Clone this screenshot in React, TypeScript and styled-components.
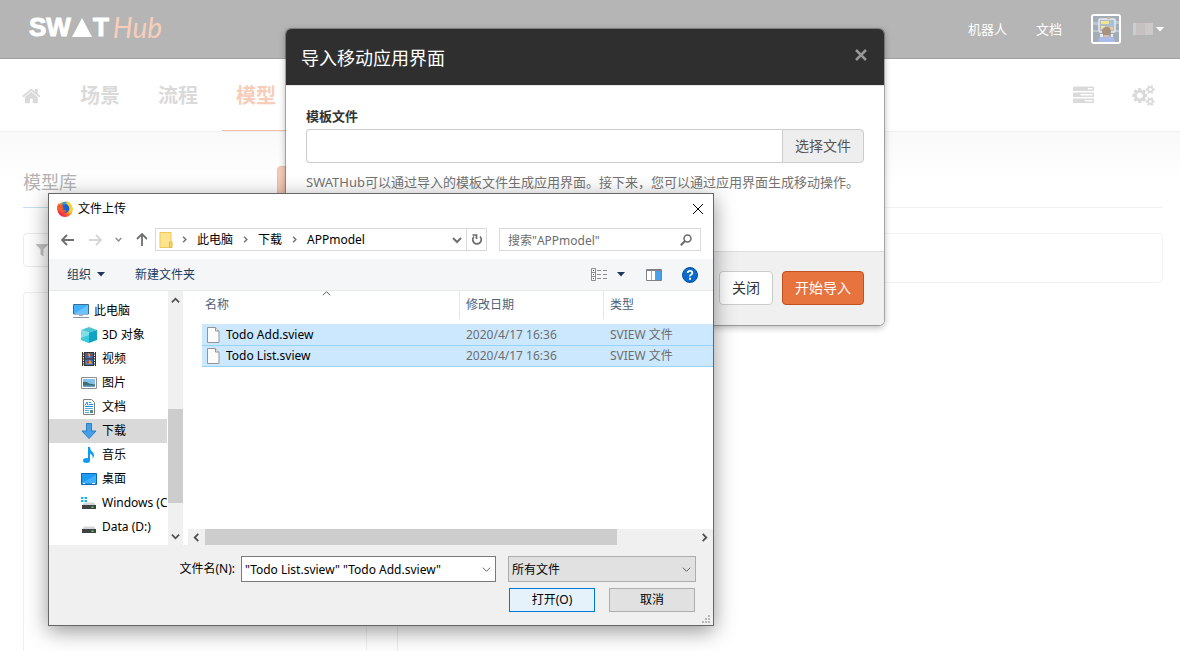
import React from "react";
import styled, { createGlobalStyle, css } from "styled-components";
import { FaFilter } from "react-icons/fa";

const GlobalStyle = createGlobalStyle`
  * { box-sizing: border-box; }
  html, body { margin: 0; padding: 0; }
  body {
    font-family: "Noto Sans", "Noto Sans CJK SC", sans-serif;
    font-size: 13px;
    line-height: 20px;
    color: #333;
    background: #fff;
  }
  button, input, select { font-family: inherit; margin: 0; }
  svg { display: block; flex: none; }
`;

/* ---------- page behind the dialogs ---------- */

const Page = styled.div`
  position: relative;
  min-height: 100vh;
  overflow: hidden;
  display: flex;
  flex-direction: column;
`;

const TopBar = styled.header`
  display: flex;
  align-items: center;
  justify-content: space-between;
  height: 59px;
  padding: 0 16px 0 29px;
  background: #b5b5b5;
  border-bottom: 1px solid #a2a2a2;
`;

const Logo = styled.a`
  display: flex;
  align-items: center;
  gap: 1px;
  height: 58px;
  padding-bottom: 4px;
  color: #fff;
  text-decoration: none;
  font: bold 26px/30px "Liberation Sans", sans-serif;
  -webkit-text-stroke: 1px #fff;
`;

const LogoHub = styled.span`
  margin-left: 3px;
  color: #f8cdb9;
  font: italic 400 28px/30px Lato, sans-serif;
  -webkit-text-stroke: 0;
`;

const TopLinks = styled.nav`
  display: flex;
  align-items: center;
`;

const TopLink = styled.a`
  margin-right: 29px;
  color: #fff;
  text-decoration: none;
`;

const Avatar = styled.span`
  width: 30px;
  height: 30px;
  margin-right: 12px;
  border: 2px solid #fff;
  border-radius: 3px;
  overflow: hidden;
`;

const UserMenu = styled.button`
  display: flex;
  align-items: center;
  gap: 3px;
  padding: 0;
  border: 0;
  background: none;
`;

const UserName = styled.span`
  width: 20px;
  height: 12px;
  background: linear-gradient(90deg, #c5d0d2 0 3px, #c6c0c0 3px 12px, #cbc9c9 12px);
`;

const NavBar = styled.div`
  display: flex;
  justify-content: space-between;
  height: 73px;
  padding: 0 11px 0 8px;
  border-bottom: 1px solid #f0f0f0;
`;

const NavGroup = styled.nav`
  display: flex;
  gap: 10px;
`;

const NavItem = styled.a<{ $active?: boolean }>`
  display: flex;
  align-items: center;
  height: 72px;
  padding: 2px 14px 0;
  color: ${(p) => (p.$active ? "#f7cdb9" : "#dadada")};
  border-bottom: 1px solid ${(p) => (p.$active ? "#f5bfa6" : "transparent")};
  font-size: 20px;
  font-weight: bold;
  text-decoration: none;
`;

const Main = styled.main`
  flex: 1;
  display: flex;
  flex-direction: column;
  padding: 34px 17px 0 23px;
  background: linear-gradient(#f9f9f9, #fff 50px);
`;

const TitleRow = styled.div`
  display: flex;
  justify-content: space-between;
  height: 42px;
  border-bottom: 1px solid #f2f2f2;
`;

const Title = styled.h1`
  margin: 0;
  height: 42px;
  padding-top: 3px;
  border-bottom: 1px solid #c5e0ef;
  color: #b3b3b3;
  font-size: 18px;
  line-height: 26px;
  font-weight: 400;
`;

const NewButton = styled.button`
  width: 120px;
  height: 34px;
  margin-right: 766px;
  border: 1px solid #efbda8;
  border-radius: 4px;
  background: #f7cbb8;
`;

const Columns = styled.div`
  flex: 1;
  display: flex;
  gap: 30px;
  margin-top: 25px;
`;

const LeftColumn = styled.div`
  flex: 0 0 344px;
  display: flex;
  flex-direction: column;
  gap: 25px;
`;

const RightColumn = styled.div`
  flex: 1;
  display: flex;
  flex-direction: column;
`;

const FilterButton = styled.button`
  display: flex;
  align-items: center;
  height: 34px;
  padding: 0 12px;
  border: 1px solid #ebebeb;
  border-radius: 4px;
  background: #fff;
  color: #c4c4c4;
`;

const TreePanel = styled.div`
  flex: 1;
  border: 1px solid #f0f0f0;
  border-bottom: 0;
  border-radius: 4px 4px 0 0;
`;

const Toolbar = styled.div`
  height: 50px;
  border: 1px solid #f2f2f2;
  border-radius: 4px;
`;

const Canvas = styled.div`
  flex: 1;
  border-left: 1px solid #ebebeb;
`;

/* ---------- import modal ---------- */

const Overlay = styled.div`
  position: absolute;
  inset: 0;
  display: flex;
  align-items: flex-start;
  justify-content: center;
  padding: 28px 10px 0 0;
`;

const Modal = styled.section`
  width: 600px;
  border: 1px solid rgba(0, 0, 0, 0.25);
  border-radius: 6px;
  background: #fff;
  background-clip: padding-box;
  box-shadow: 0 2px 6px rgba(0, 0, 0, 0.25);
  overflow: hidden;
`;

const ModalHeader = styled.header`
  display: flex;
  justify-content: space-between;
  height: 57px;
  padding: 16px 17px 14px 15px;
  background: #2f2f2f;
  border-bottom: 1px solid #e5e5e5;
`;

const ModalTitle = styled.h2`
  margin: 0;
  color: #fff;
  font-size: 18px;
  line-height: 26px;
  font-weight: normal;
`;

const ModalClose = styled.button`
  display: flex;
  align-items: center;
  height: 20px;
  padding: 0;
  border: 0;
  background: none;
`;

const ModalBody = styled.div`
  height: 165px;
  padding: 20px;
`;

const FieldLabel = styled.label`
  display: block;
  margin-bottom: 3px;
  color: #333;
  font-weight: bold;
`;

const InputGroup = styled.div`
  display: flex;
  height: 34px;
`;

const FileInput = styled.input`
  flex: 1;
  min-width: 0;
  padding: 0 12px;
  border: 1px solid #ccc;
  border-right: 0;
  border-radius: 4px 0 0 4px;
  font-size: 14px;
`;

const Button = styled.button<{ $kind?: "addon" | "primary" }>`
  height: 34px;
  padding: 0 12px;
  border: 1px solid #ccc;
  border-radius: 4px;
  background: #fff;
  color: #333;
  font-size: 14px;
  line-height: 20px;
  ${(p) =>
    p.$kind === "addon" &&
    css`
      border-radius: 0 4px 4px 0;
      background: #eee;
      color: #555;
    `}
  ${(p) =>
    p.$kind === "primary" &&
    css`
      border-color: #c2511f;
      background: #e7733f;
      color: #fff;
    `}
`;

const HelpText = styled.p`
  margin: 9px 0 0;
  color: #737373;
  white-space: nowrap;
`;

const ModalFooter = styled.footer`
  display: flex;
  justify-content: flex-end;
  gap: 9px;
  padding: 19px 20px 20px;
  background: #f0f0f0;
  border-top: 1px solid #ddd;
`;

/* ---------- native file picker window ---------- */

const Window = styled.section`
  position: absolute;
  left: 48px;
  top: 193px;
  width: 666px;
  display: flex;
  flex-direction: column;
  border: 1px solid #666;
  background: #fff;
  color: #000;
  font-size: 12px;
  line-height: 16px;
  box-shadow: 0 5px 20px rgba(0, 0, 0, 0.42);
`;

const WindowTitle = styled.header`
  display: flex;
  align-items: center;
  gap: 5px;
  height: 29px;
  padding: 0 9px 0 8px;
`;

const WindowName = styled.h2`
  flex: 1;
  margin: 0;
  font-size: 12px;
  line-height: 16px;
  font-weight: normal;
`;

const IconButton = styled.button`
  display: flex;
  align-items: center;
  justify-content: center;
  padding: 0;
  border: 0;
  background: none;
  color: #1e395b;
`;

const AddressRow = styled.div`
  display: flex;
  align-items: center;
  gap: 12px;
  height: 36px;
  padding: 0 12px 3px;
`;

const HistoryButtons = styled.div`
  display: flex;
  align-items: center;
  justify-content: space-between;
  width: 88px;
`;

const AddressBar = styled.div`
  display: flex;
  align-items: center;
  flex: 1;
  height: 23px;
  margin-left: -6px;
  padding-left: 3px;
  border: 1px solid #d9d9d9;
`;

const Crumbs = styled.div`
  display: flex;
  align-items: center;
  flex: 1;
  gap: 9px;
  margin-left: 8px;
`;

const Crumb = styled.a`
  color: #000;
  text-decoration: none;
`;

const Refresh = styled(IconButton)`
  width: 20px;
  height: 21px;
  margin-left: 4px;
  border-left: 1px solid #d9d9d9;
`;

const SearchBox = styled.label`
  display: flex;
  align-items: center;
  width: 202px;
  height: 23px;
  padding: 1px 8px 0;
  border: 1px solid #d9d9d9;
`;

const SearchInput = styled.input`
  flex: 1;
  min-width: 0;
  padding: 0;
  border: 0;
  font-size: 12px;
  &::placeholder { color: #6d6d6d; opacity: 1; }
`;

const CommandBar = styled.div`
  display: flex;
  align-items: center;
  height: 32px;
  padding: 0 15px 0 18px;
  background: #f5f6f8;
  border-bottom: 1px solid #e8e9eb;
`;

const Command = styled.button`
  display: flex;
  align-items: center;
  gap: 6px;
  margin-right: 30px;
  padding: 0;
  border: 0;
  background: none;
  color: #1e395b;
  font-size: 12px;
  line-height: 16px;
`;

const CommandRight = styled.div`
  display: flex;
  align-items: center;
  margin-left: auto;
`;

const ViewCaret = styled(IconButton)`
  margin: 0 21px 0 9px;
`;

const HelpButton = styled(IconButton)`
  margin-left: 20px;
`;

const Browser = styled.div`
  display: flex;
  height: 254px;
`;

const Tree = styled.ul`
  width: 118px;
  margin: 0;
  padding: 8px 0 0;
  overflow: hidden;
  list-style: none;
`;

const TreeItem = styled.button<{ $level: number; $selected?: boolean }>`
  display: flex;
  align-items: center;
  gap: 5px;
  width: 100%;
  height: 24px;
  padding: 0 0 0 ${(p) => 16 + p.$level * 8}px;
  border: 0;
  background: ${(p) => (p.$selected ? "#d9d9d9" : "transparent")};
  color: #000;
  font-size: 12px;
  line-height: 16px;
  white-space: nowrap;
`;

const TreeScroll = styled.div`
  display: flex;
  flex-direction: column;
  align-items: center;
  justify-content: space-between;
  width: 15px;
  margin: 0 5px 0 1px;
  padding: 5px 0 4px;
  background: #f0f0f0;
`;

const TreeThumb = styled.div`
  width: 15px;
  height: 94px;
  margin-top: 74px;
  background: #cdcdcd;
`;

const Listing = styled.div`
  flex: 1;
  min-width: 0;
  display: flex;
  flex-direction: column;
  justify-content: space-between;
`;

const FileTable = styled.table`
  width: calc(100% - 14px);
  margin-left: 14px;
  table-layout: fixed;
  border-collapse: collapse;
`;

const HeadCell = styled.th`
  position: relative;
  height: 33px;
  padding: 0 0 5px;
  text-align: left;
  font-weight: normal;
  color: #4c607a;
`;

const HeadLabel = styled.div<{ $last?: boolean; $first?: boolean }>`
  height: 28px;
  padding-left: ${(p) => (p.$first ? 3 : 6)}px;
  border-right: ${(p) => (p.$last ? 0 : 1)}px solid #e5e5e5;
  line-height: 27px;
`;

const SortMark = styled.span`
  position: absolute;
  right: 50%;
  top: -2px;
`;

const FileRow = styled.tr`
  height: 21px;
  background: #cce8ff;
  border-bottom: 1px solid #99d1ff;
`;

const FileCell = styled.td<{ $muted?: boolean }>`
  padding: 1px 0 0 ${(p) => (p.$muted ? 6 : 5)}px;
  color: ${(p) => (p.$muted ? "#6d6d6d" : "#000")};
`;

const FileName = styled.span`
  display: flex;
  align-items: center;
  gap: 6px;
`;

const ListScroll = styled.div`
  display: flex;
  align-items: center;
  height: 16px;
  padding: 0 4px;
  background: #f0f0f0;
`;

const ListThumb = styled.div`
  width: 412px;
  height: 16px;
  margin: 0 auto 0 4px;
  background: #cdcdcd;
`;

const WindowFooter = styled.footer`
  position: relative;
  display: flex;
  flex-direction: column;
  gap: 6px;
  height: 80px;
  padding: 11px 17px 0 0;
  background: #f0f0f0;
`;

const FooterRow = styled.div<{ $gap: number; $inset?: number }>`
  display: flex;
  justify-content: flex-end;
  align-items: center;
  gap: ${(p) => p.$gap}px;
  padding-right: ${(p) => p.$inset || 0}px;
`;

const NameField = styled.div`
  display: flex;
  align-items: center;
  gap: 6px;
`;

const Combo = styled.div<{ $kind: "input" | "select" }>`
  display: flex;
  align-items: center;
  width: ${(p) => (p.$kind === "input" ? 255 : 188)}px;
  height: 26px;
  padding-right: 4px;
  border: 1px solid ${(p) => (p.$kind === "input" ? "#7a7a7a" : "#adadad")};
  background: ${(p) => (p.$kind === "input" ? "#fff" : "#e1e1e1")};
`;

const ComboInput = styled.input`
  flex: 1;
  min-width: 0;
  padding: 0 0 0 3px;
  border: 0;
  outline: 0;
  background: none;
  color: #000;
  font-size: 12px;
`;

const ComboSelect = styled.select`
  flex: 1;
  min-width: 0;
  padding: 0 0 0 3px;
  border: 0;
  appearance: none;
  background: none;
  color: #000;
  font-size: 12px;
`;

const WindowButton = styled.button<{ $primary?: boolean }>`
  width: 86px;
  height: 24px;
  padding: 0;
  border: 1px solid ${(p) => (p.$primary ? "#0078d7" : "#adadad")};
  background: ${(p) => (p.$primary ? "#e5f1fb" : "#e1e1e1")};
  color: #000;
  font-size: 12px;
  line-height: 16px;
`;

const Grip = styled.span`
  position: absolute;
  right: 3px;
  bottom: 2px;
`;

/* ---------- icons ---------- */

const HomeIcon = () => (
  <svg width="20" height="20" viewBox="0 0 1792 1792" fill="currentColor">
    <path d="M1408 992v480q0 26-19 45t-45 19h-384v-384h-256v384h-384q-26 0-45-19t-19-45v-480q0-1 .5-3t.5-3l575-474 575 474q1 2 1 6zm223-69l-62 74q-8 9-21 11h-3q-13 0-21-7l-692-577-692 577q-12 8-24 7-13-2-21-11l-62-74q-8-10-7-23.5t11-21.5l719-599q32-26 76-26t76 26l244 204v-195q0-14 9-23t23-9h192q14 0 23 9t9 23v408l219 182q10 8 11 21.5t-7 23.5z" />
  </svg>
);

const TasksIcon = () => (
  <svg width="21" height="21" viewBox="0 0 1792 1792" fill="currentColor">
    <path d="M1024 1408h640v-128h-640v128zm-384-512h1024v-128h-1024v128zm640-512h384v-128h-384v128zm512 832v256q0 26-19 45t-45 19h-1664q-26 0-45-19t-19-45v-256q0-26 19-45t45-19h1664q26 0 45 19t19 45zm0-512v256q0 26-19 45t-45 19h-1664q-26 0-45-19t-19-45v-256q0-26 19-45t45-19h1664q26 0 45 19t19 45zm0-512v256q0 26-19 45t-45 19h-1664q-26 0-45-19t-19-45v-256q0-26 19-45t45-19h1664q26 0 45 19t19 45z" />
  </svg>
);

const CogsIcon = () => (
  <svg width="23" height="21" viewBox="0 0 1920 1792" fill="currentColor">
    <path d="M896 896q0-106-75-181t-181-75-181 75-75 181 75 181 181 75 181-75 75-181zm768 512q0-52-38-90t-90-38-90 38-38 90q0 53 37.5 90.5t90.5 37.5 90.5-37.5 37.5-90.5zm0-1024q0-52-38-90t-90-38-90 38-38 90q0 53 37.5 90.5t90.5 37.5 90.5-37.5 37.5-90.5zm-384 421v185q0 10-7 19.5t-16 10.5l-155 24q-11 35-32 76 34 48 90 115 7 11 7 20 0 12-7 19-23 30-82.5 89.5t-78.5 59.5q-11 0-21-7l-115-90q-37 19-77 31-11 108-23 155-7 24-30 24h-186q-11 0-20-7.5t-10-17.5l-23-153q-34-10-75-31l-118 89q-7 7-20 7-11 0-21-8-144-133-144-160 0-9 7-19 10-14 41-53t47-61q-23-44-35-82l-152-24q-10-1-17-9.5t-7-19.5v-185q0-10 7-19.5t16-10.5l155-24q11-35 32-76-34-48-90-115-7-11-7-20 0-12 7-20 22-30 82-89t79-59q11 0 21 7l115 90q34-18 77-32 11-108 23-154 7-24 30-24h186q11 0 20 7.5t10 17.5l23 153q34 10 75 31l118-89q8-7 20-7 11 0 21 8 144 133 144 160 0 8-7 19-12 16-42 54t-45 60q23 48 34 82l152 23q10 2 17 10.5t7 19.500zm640 533v140q0 16-149 31-12 27-30 52 51 113 51 138 0 4-4 7-122 71-124 71-8 0-46-47t-52-68q-20 2-30 2t-30-2q-14 21-52 68t-46 47q-2 0-124-71-4-3-4-7 0-25 51-138-18-25-30-52-149-15-149-31v-140q0-16 149-31 13-29 30-52-51-113-51-138 0-4 4-7 4-2 35-20t59-34 30-16q8 0 46 46.5t52 67.5q20-2 30-2t30 2q51-71 92-112l6-2q4 0 124 70 4 3 4 7 0 25-51 138 17 23 30 52 149 15 149 31zm0-1024v140q0 16-149 31-12 27-30 52 51 113 51 138 0 4-4 7-122 71-124 71-8 0-46-47t-52-68q-20 2-30 2t-30-2q-14 21-52 68t-46 47q-2 0-124-71-4-3-4-7 0-25 51-138-18-25-30-52-149-15-149-31v-140q0-16 149-31 13-29 30-52-51-113-51-138 0-4 4-7 4-2 35-20t59-34 30-16q8 0 46 46.5t52 67.5q20-2 30-2t30 2q51-71 92-112l6-2q4 0 124 70 4 3 4 7 0 25-51 138 17 23 30 52 149 15 149 31z" />
  </svg>
);

const AvatarArt = () => (
  <svg width="26" height="26" viewBox="0 0 26 26">
    <rect width="26" height="26" fill="#a3adb8" />
    <path d="M0 6h6v3H0zM21 5h5v3h-5zM0 14h5v2H0zM22 14h4v2h-4z" fill="#bcc6cc" />
    <rect x="6" y="3" width="16" height="13" rx="1" fill="#b3bcc5" stroke="#e6ecef" strokeWidth="1.5" />
    <rect x="8" y="5" width="8" height="3" fill="#f1e48f" />
    <rect x="8" y="10" width="4" height="3" fill="#efe39a" />
    <rect x="17" y="5" width="3" height="5" fill="#9fc3e0" />
    <rect x="17" y="11" width="3" height="3" fill="#e7cf9d" />
    <path d="M14 1h3v2h-3z" fill="#e3a3a3" />
    <circle cx="13.5" cy="15.5" r="4.5" fill="#a8927f" />
    <path d="M11 19h5v3h-5z" fill="#d8bda7" />
    <path d="M5 26l1-4 5-2 2 2 3-2 5 2 1 4z" fill="#a9bbe6" />
    <path d="M7 18h3v3H7zM18 18h2v3h-2z" fill="#e9edf0" />
  </svg>
);

const Caret = ({ color }: { color: string }) => (
  <svg width="8" height="5" viewBox="0 0 8 5">
    <path d="M0 0h8L4 4.5z" fill={color} />
  </svg>
);

type Dir = "up" | "down" | "left" | "right";
const angles: Record<Dir, number> = { down: 0, left: 90, up: 180, right: 270 };

type ChevronProps = { dir: Dir; size?: number; color?: string; weight?: number };
const Chevron = ({ dir, size = 9, color = "#505050", weight = 2 }: ChevronProps) => (
  <svg width={size} height={size} viewBox="0 0 10 10" fill="none" stroke={color} strokeWidth={weight}>
    <path d="M1 3l4 4 4-4" transform={`rotate(${angles[dir]} 5 5)`} />
  </svg>
);

const Arrow = ({ dir, color }: { dir: Dir; color: string }) => (
  <svg width="14" height="14" viewBox="0 0 14 14" fill="none" stroke={color} strokeWidth="1.8">
    <path d="M7 1v12M2 8l5 5 5-5" transform={`rotate(${angles[dir]} 7 7)`} />
  </svg>
);

const Cross = ({ size, color, weight }: { size: number; color: string; weight: number }) => (
  <svg width={size} height={size} viewBox="0 0 12 12" stroke={color} strokeWidth={weight}>
    <path d="M1 1l10 10M11 1L1 11" />
  </svg>
);

const FirefoxIcon = () => (
  <svg width="16" height="16" viewBox="0 0 16 16">
    <defs>
      <linearGradient id="fox" x1="1" y1="0" x2="0" y2="1">
        <stop offset="0" stopColor="#ffe837" />
        <stop offset="0.45" stopColor="#ff9416" />
        <stop offset="0.75" stopColor="#fb2f3f" />
        <stop offset="1" stopColor="#d9127a" />
      </linearGradient>
    </defs>
    <circle cx="8" cy="8.3" r="7.7" fill="url(#fox)" />
    <circle cx="7.8" cy="7.3" r="4.6" fill="#1a63d6" />
    <path d="M4 3q3-3 6-2L8 4z" fill="#2d9bf0" />
    <path d="M0 8q0-4 2-6 0 2 1.500 2.500Q5 4 6.500 4.500L5.500 6.500q2 0 2 .8L5.500 8q1 2 4 1-1 3-4 2.500Q2 11 0 8z" fill="#fb5a2b" />
    <path d="M10 0q5 2 5.500 8-1 4-4 5 2-4 1-7Q10 4 10 0z" fill="#ffd42e" />
  </svg>
);

const FolderIcon = () => (
  <svg width="14" height="16" viewBox="0 0 14 16">
    <path d="M1 .5h11v15H1z" fill="#ffe48f" stroke="#f0c759" />
    <path d="M10.5 10h2.500v5.500h-2.500z" fill="#fbd768" stroke="#e6b740" />
  </svg>
);

const RefreshIcon = () => (
  <svg width="12" height="13" viewBox="0 0 12 13" fill="none" stroke="#6a6a6a" strokeWidth="1.7">
    <path d="M3 3.500a4.300 4.300 0 1 0 6 0M1.500 2h4v4" />
  </svg>
);

const SearchIcon = () => (
  <svg width="12" height="12" viewBox="0 0 12 12" fill="none" stroke="#6a6a6a" strokeWidth="1.5">
    <circle cx="7.5" cy="4.5" r="3.5" />
    <path d="M5 7L.8 11.2" strokeWidth="2" />
  </svg>
);

const ViewIcon = () => (
  <svg width="17" height="13" viewBox="0 0 17 13">
    <path d="M.5.5h4v12h-4zM.5 4.500h4M.5 8.500h4" fill="#fff" stroke="#8c8c8c" />
    <path d="M2 2h1v1H2zM2 6h1v1H2zM2 10h1v1H2z" fill="#555" />
    <path d="M6 2.500h4M12 2.500h4M6 6.500h4M12 6.500h4M6 10.500h4M12 10.500h4" stroke="#8c8c8c" />
  </svg>
);

const PaneIcon = () => (
  <svg width="16" height="12" viewBox="0 0 16 12">
    <path d="M.5.5h15v11H.5z" fill="#fff" stroke="#7c8288" />
    <path d="M1 1.500h14" stroke="#7c8288" />
    <path d="M5.5 2v9" stroke="#a5a9ad" />
    <path d="M9 2h6v9H9z" fill="#4a9fe8" />
  </svg>
);

const HelpIcon = () => (
  <svg width="16" height="16" viewBox="0 0 16 16">
    <circle cx="8" cy="8" r="7.5" fill="#0a6bcf" stroke="#084f9c" />
    <path d="M5.700 6q0-2.200 2.300-2.200T10.300 6Q10.300 7 9 7.700T8 9.500" fill="none" stroke="#fff" strokeWidth="1.8" />
    <path d="M7 10.800h2v2H7z" fill="#fff" />
  </svg>
);

const FileIcon = () => (
  <svg width="13" height="16" viewBox="0 0 13 16">
    <path d="M.5.5h8l3.500 3.500v11.500H.5z" fill="#fbfbfb" stroke="#959595" />
    <path d="M8.500.5v3.500h3.500" fill="#e8e8e8" stroke="#959595" />
  </svg>
);

const DiskIcon = ({ system }: { system?: boolean }) => (
  <svg width="16" height="16" viewBox="0 0 16 16">
    {system && <path d="M0 2h2.500v2H0zM3.500 2H6v2H3.500zM0 5h2.500v2H0zM3.500 5H6v2H3.500z" fill="#1fb4ee" />}
    <path d="M3 7.500h10l2 3H1z" fill="#d3d5d7" />
    <path d="M1 10h14v4H1z" fill="#3f4347" />
    <path d="M10.500 11.500h2v1.500h-2z" fill="#5fe34f" />
  </svg>
);

const treeIcons: Record<string, React.ReactNode> = {
  pc: (
    <svg width="16" height="16" viewBox="0 0 16 16">
      <path d="M.5 1.500h15v9.500H.5z" fill="#43b0ff" stroke="#3a6f94" />
      <path d="M1 11L15 2v9z" fill="#6ac3ff" />
      <path d="M6 12h4v1H6z" fill="#8bb0c8" />
      <path d="M0 14.500h16" stroke="#8396a5" />
    </svg>
  ),
  cube: (
    <svg width="16" height="16" viewBox="0 0 16 16">
      <path d="M0 3l8-3 8 3-8 2.500z" fill="#4cc4cf" />
      <path d="M0 3l8 2.500V16l-8-3z" fill="#7edfe8" />
      <path d="M16 3L8 5.500V16l8-3z" fill="#0ea5c4" />
      <path d="M0 11l8-3v8l-8-3z" fill="#3ccadb" />
    </svg>
  ),
  video: (
    <svg width="16" height="16" viewBox="0 0 16 16">
      <path d="M1 1h14v14H1z" fill="#35322f" />
      <path d="M2.500 1v14M13.500 1v14" stroke="#eee" strokeDasharray="1.5 1" />
      <path d="M4 2h8v5.500H4z" fill="#49619f" />
      <path d="M4 8.500h8V14H4z" fill="#4b70b5" />
      <path d="M7 2l3 2-2 3zM5 12l4-3 2 4z" fill="#e2ae2c" />
      <path d="M9 3h2v2H9zM6 10h2v2H6z" fill="#c93a2c" />
    </svg>
  ),
  picture: (
    <svg width="16" height="16" viewBox="0 0 16 16">
      <path d="M.5 2.500h15v11H.5z" fill="#fff" stroke="#8e8e8e" />
      <path d="M2 4h12v8H2z" fill="#85c1ec" />
      <path d="M2 7q4-1 6 1.500l6 1V12H2z" fill="#3b6f72" />
      <path d="M2 10.500h12V12H2z" fill="#6d9fc9" />
    </svg>
  ),
  doc: (
    <svg width="16" height="16" viewBox="0 0 16 16">
      <path d="M2.500.5h8l3 3v12h-11z" fill="#fff" stroke="#7e7e7e" />
      <path d="M4 6.500l2-3.500 1 3.500M8 3.500h2M8 5.500h4M4 7.500h8" fill="none" stroke="#1f8fe0" />
      <path d="M4 9.500h8M4 11.500h4M4 13.500h4" stroke="#5aa9df" />
      <path d="M9 11h3v3H9z" fill="#5a8c7a" />
    </svg>
  ),
  download: (
    <svg width="16" height="16" viewBox="0 0 16 16">
      <path d="M5.500.5h5V8h4.500L8 15.500 1 8h4.500z" fill="#429fea" stroke="#2b7cc4" />
    </svg>
  ),
  music: (
    <svg width="16" height="16" viewBox="0 0 16 16">
      <ellipse cx="5.5" cy="13.5" rx="3.500" ry="2.500" fill="#0f9bf2" />
      <path d="M7 0h2q0 3 2.500 5 3 3 0 7 1-4-2.500-5.500V13.500H7z" fill="#0f9bf2" />
    </svg>
  ),
  desktop: (
    <svg width="16" height="16" viewBox="0 0 16 16">
      <path d="M.5 2.500h15v11H.5z" fill="#1f9bf5" stroke="#0d68b4" />
      <path d="M1 12L15 4v8z" fill="#3fb0ff" />
      <path d="M2 12.500h2M11 12.500h3" stroke="#fff" />
    </svg>
  ),
  system: <DiskIcon system />,
  disk: <DiskIcon />,
};

/* ---------- data ---------- */

const places = [
  { icon: "pc", name: "此电脑", level: 1 },
  { icon: "cube", name: "3D 对象", level: 2 },
  { icon: "video", name: "视频", level: 2 },
  { icon: "picture", name: "图片", level: 2 },
  { icon: "doc", name: "文档", level: 2 },
  { icon: "download", name: "下载", level: 2, selected: true },
  { icon: "music", name: "音乐", level: 2 },
  { icon: "desktop", name: "桌面", level: 2 },
  { icon: "system", name: "Windows (C:)", level: 2 },
  { icon: "disk", name: "Data (D:)", level: 2 },
];

const files = [
  { name: "Todo Add.sview", date: "2020/4/17 16:36", type: "SVIEW 文件" },
  { name: "Todo List.sview", date: "2020/4/17 16:36", type: "SVIEW 文件" },
];

const crumbs = ["此电脑", "下载", "APPmodel"];

/* ---------- sections ---------- */

const Background = () => (
  <>
    <TopBar>
      <Logo href="#">
        SW
        <svg width="20" height="19" viewBox="0 0 20 19">
          <path d="M10 0l10 19H0z" fill="#fff" />
        </svg>
        T<LogoHub>Hub</LogoHub>
      </Logo>
      <TopLinks>
        <TopLink href="#">机器人</TopLink>
        <TopLink href="#">文档</TopLink>
        <Avatar>
          <AvatarArt />
        </Avatar>
        <UserMenu aria-label="用户菜单">
          <UserName />
          <Caret color="#fff" />
        </UserMenu>
      </TopLinks>
    </TopBar>
    <NavBar>
      <NavGroup>
        <NavItem href="#" aria-label="首页">
          <HomeIcon />
        </NavItem>
        <NavItem href="#">场景</NavItem>
        <NavItem href="#">流程</NavItem>
        <NavItem href="#" $active>
          模型
        </NavItem>
      </NavGroup>
      <NavGroup>
        <NavItem href="#" aria-label="任务">
          <TasksIcon />
        </NavItem>
        <NavItem href="#" aria-label="设置">
          <CogsIcon />
        </NavItem>
      </NavGroup>
    </NavBar>
    <Main>
      <TitleRow>
        <Title>模型库</Title>
        <NewButton aria-label="新建" />
      </TitleRow>
      <Columns>
        <LeftColumn>
          <FilterButton aria-label="筛选">
            <FaFilter size={12} />
          </FilterButton>
          <TreePanel />
        </LeftColumn>
        <RightColumn>
          <Toolbar />
          <Canvas />
        </RightColumn>
      </Columns>
    </Main>
  </>
);

const ImportModal = () => (
  <Overlay>
    <Modal role="dialog" aria-labelledby="import-title">
      <ModalHeader>
        <ModalTitle id="import-title">导入移动应用界面</ModalTitle>
        <ModalClose aria-label="关闭">
          <Cross size={12} color="#979797" weight={2.5} />
        </ModalClose>
      </ModalHeader>
      <ModalBody>
        <FieldLabel htmlFor="template">模板文件</FieldLabel>
        <InputGroup>
          <FileInput id="template" />
          <Button $kind="addon">选择文件</Button>
        </InputGroup>
        <HelpText>SWATHub可以通过导入的模板文件生成应用界面。接下来，您可以通过应用界面生成移动操作。</HelpText>
      </ModalBody>
      <ModalFooter>
        <Button>关闭</Button>
        <Button $kind="primary">开始导入</Button>
      </ModalFooter>
    </Modal>
  </Overlay>
);

const FilePicker = () => (
  <Window role="dialog" aria-labelledby="picker-title">
    <WindowTitle>
      <FirefoxIcon />
      <WindowName id="picker-title">文件上传</WindowName>
      <IconButton aria-label="关闭窗口">
        <Cross size={12} color="#000" weight={1} />
      </IconButton>
    </WindowTitle>
    <AddressRow>
      <HistoryButtons>
        <IconButton aria-label="后退">
          <Arrow dir="left" color="#6f6f6f" />
        </IconButton>
        <IconButton aria-label="前进">
          <Arrow dir="right" color="#d6d6d6" />
        </IconButton>
        <IconButton aria-label="最近位置">
          <Chevron dir="down" size={7} color="#8a8a8a" />
        </IconButton>
        <IconButton aria-label="上一级">
          <Arrow dir="up" color="#6f6f6f" />
        </IconButton>
      </HistoryButtons>
      <AddressBar>
        <FolderIcon />
        <Crumbs>
          {crumbs.map((name) => (
            <React.Fragment key={name}>
              <Chevron dir="right" size={7} color="#707070" />
              <Crumb href="#">{name}</Crumb>
            </React.Fragment>
          ))}
        </Crumbs>
        <Chevron dir="down" size={10} color="#707070" />
        <Refresh aria-label="刷新">
          <RefreshIcon />
        </Refresh>
      </AddressBar>
      <SearchBox>
        <SearchInput placeholder={'搜索"APPmodel"'} aria-label="搜索" />
        <SearchIcon />
      </SearchBox>
    </AddressRow>
    <CommandBar>
      <Command>
        组织
        <Caret color="#1e395b" />
      </Command>
      <Command>新建文件夹</Command>
      <CommandRight>
        <IconButton aria-label="更改视图">
          <ViewIcon />
        </IconButton>
        <ViewCaret aria-label="更多选项">
          <Caret color="#1e395b" />
        </ViewCaret>
        <IconButton aria-label="预览窗格">
          <PaneIcon />
        </IconButton>
        <HelpButton aria-label="帮助">
          <HelpIcon />
        </HelpButton>
      </CommandRight>
    </CommandBar>
    <Browser>
      <Tree>
        {places.map((p) => (
          <li key={p.name}>
            <TreeItem $level={p.level} $selected={p.selected}>
              {treeIcons[p.icon]}
              {p.name}
            </TreeItem>
          </li>
        ))}
      </Tree>
      <TreeScroll>
        <Chevron dir="up" />
        <TreeThumb />
        <Chevron dir="down" />
      </TreeScroll>
      <Listing>
        <FileTable>
          <colgroup>
            <col width="258" />
            <col width="144" />
            <col />
          </colgroup>
          <thead>
            <tr>
              <HeadCell>
                <HeadLabel $first>名称</HeadLabel>
                <SortMark>
                  <Chevron dir="up" weight={1} />
                </SortMark>
              </HeadCell>
              <HeadCell>
                <HeadLabel>修改日期</HeadLabel>
              </HeadCell>
              <HeadCell>
                <HeadLabel $last>类型</HeadLabel>
              </HeadCell>
            </tr>
          </thead>
          <tbody>
            {files.map((f) => (
              <FileRow key={f.name}>
                <FileCell>
                  <FileName>
                    <FileIcon />
                    {f.name}
                  </FileName>
                </FileCell>
                <FileCell $muted>{f.date}</FileCell>
                <FileCell $muted>{f.type}</FileCell>
              </FileRow>
            ))}
          </tbody>
        </FileTable>
        <ListScroll>
          <Chevron dir="left" />
          <ListThumb />
          <Chevron dir="right" />
        </ListScroll>
      </Listing>
    </Browser>
    <WindowFooter>
      <FooterRow $gap={12}>
        <NameField>
          <label htmlFor="file-name">文件名(N):</label>
          <Combo $kind="input">
            <ComboInput id="file-name" defaultValue={'"Todo List.sview" "Todo Add.sview"'} />
            <Chevron dir="down" weight={1} />
          </Combo>
        </NameField>
        <Combo $kind="select">
          <ComboSelect aria-label="文件类型">
            <option>所有文件</option>
          </ComboSelect>
          <Chevron dir="down" weight={1} />
        </Combo>
      </FooterRow>
      <FooterRow $gap={14} $inset={1}>
        <WindowButton $primary>打开(O)</WindowButton>
        <WindowButton>取消</WindowButton>
      </FooterRow>
      <Grip>
        <svg width="8" height="8" viewBox="0 0 8 8" fill="#b8b8b8">
          <path d="M6 0h2v2H6zM3 3h2v2H3zM6 3h2v2H6zM0 6h2v2H0zM3 6h2v2H3zM6 6h2v2H6z" />
        </svg>
      </Grip>
    </WindowFooter>
  </Window>
);

export default function App() {
  return (
    <Page>
      <GlobalStyle />
      <Background />
      <ImportModal />
      <FilePicker />
    </Page>
  );
}
